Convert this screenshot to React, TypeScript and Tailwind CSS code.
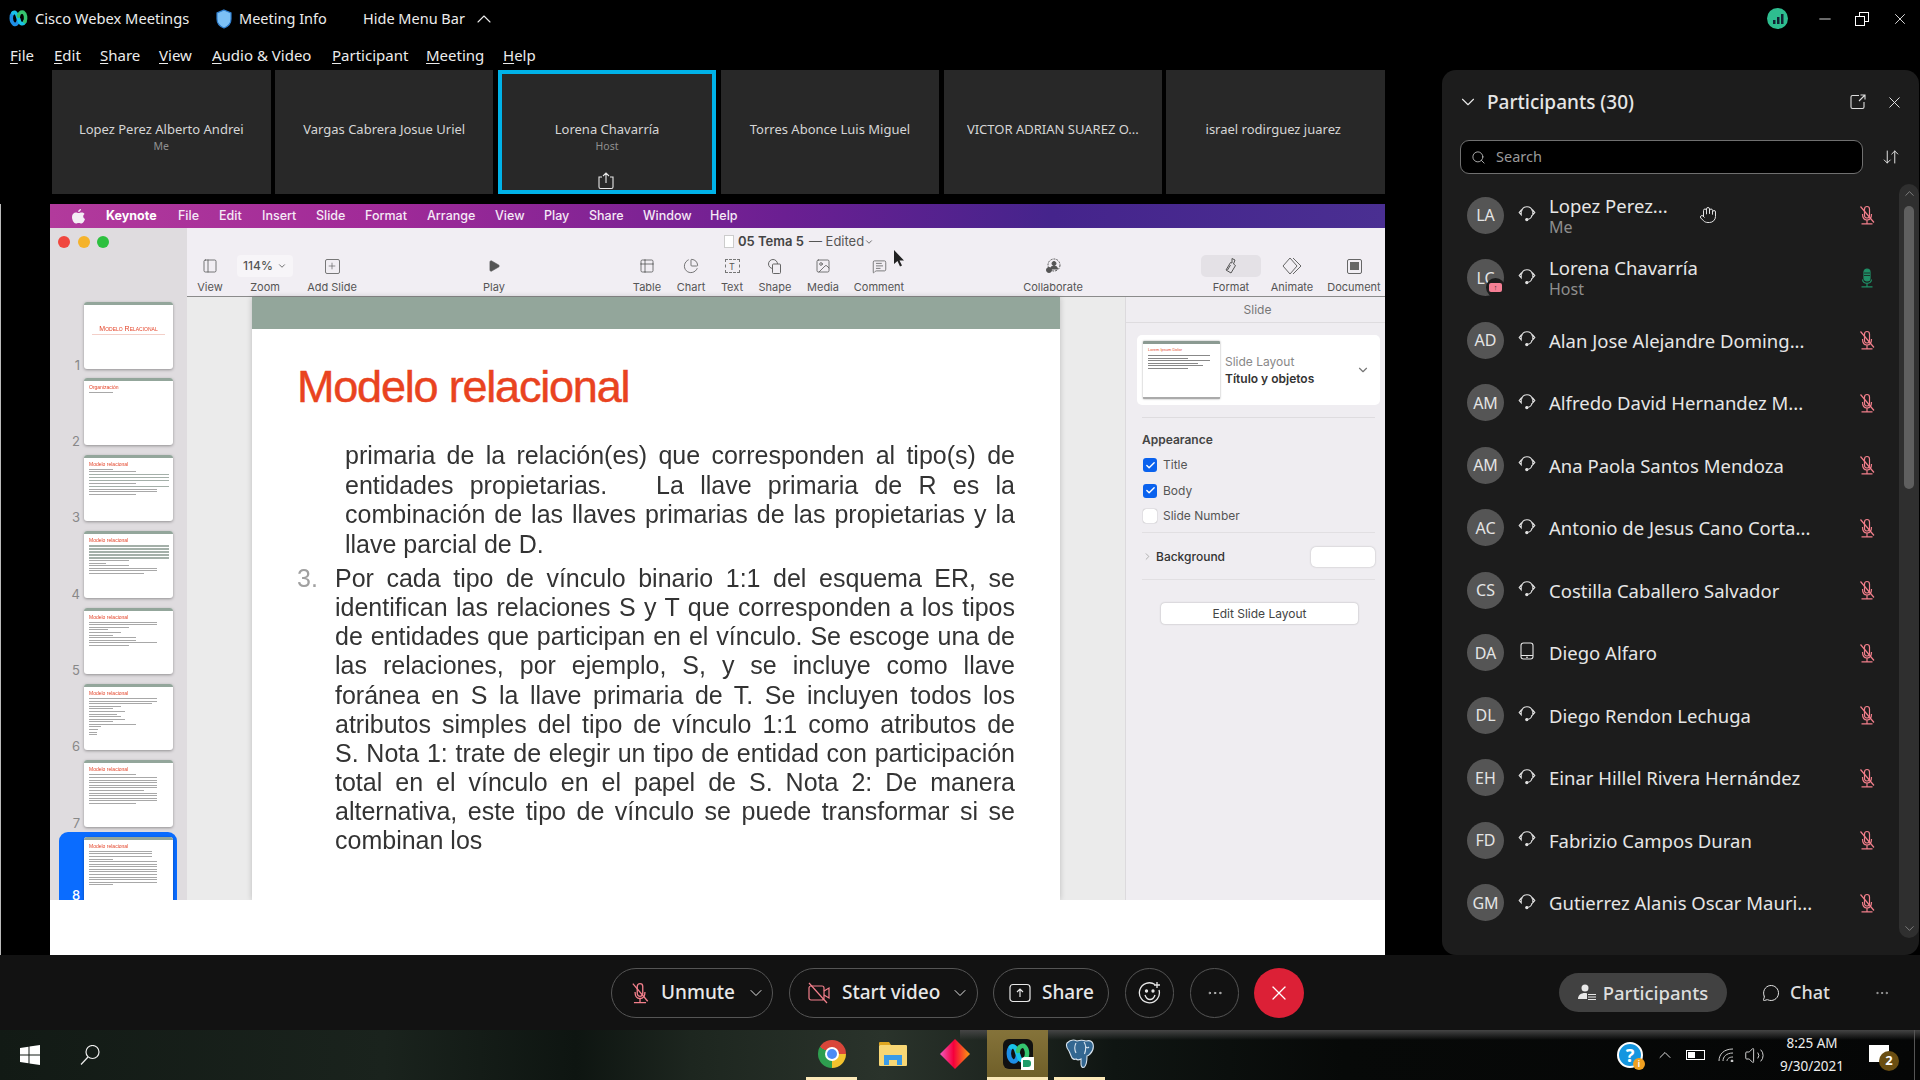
import {
  ArrowDownUp,
  ChartPie,
  ChevronDown,
  ChevronRight,
  ChevronUp,
  Check,
  Ellipsis,
  Hand,
  Image,
  MessageSquareText,
  MessageCircle,
  Minus,
  PanelLeft,
  Play,
  Plus,
  Search,
  Table2,
  Volume2,
  X,
} from 'lucide-react';

const tiles = [
  { name: 'Lopez Perez Alberto Andrei', sub: 'Me' },
  { name: 'Vargas Cabrera Josue Uriel' },
  { name: 'Lorena Chavarría', sub: 'Host', active: true },
  { name: 'Torres Abonce Luis Miguel' },
  { name: 'VICTOR ADRIAN SUAREZ O...' },
  { name: 'israel rodirguez juarez', last: true },
];

const participants = [
  { initials: 'LA', name: 'Lopez Perez...', sub: 'Me', hand: true },
  { initials: 'LC', name: 'Lorena Chavarría', sub: 'Host', host: true },
  { initials: 'AD', name: 'Alan Jose Alejandre Doming...' },
  { initials: 'AM', name: 'Alfredo David Hernandez M...' },
  { initials: 'AM', name: 'Ana Paola Santos Mendoza' },
  { initials: 'AC', name: 'Antonio de Jesus Cano Corta...' },
  { initials: 'CS', name: 'Costilla Caballero Salvador' },
  { initials: 'DA', name: 'Diego Alfaro', phone: true },
  { initials: 'DL', name: 'Diego Rendon Lechuga' },
  { initials: 'EH', name: 'Einar Hillel Rivera Hernández' },
  { initials: 'FD', name: 'Fabrizio Campos Duran' },
  { initials: 'GM', name: 'Gutierrez Alanis Oscar Mauri...' },
];

const macMenu = ['File', 'Edit', 'Insert', 'Slide', 'Format', 'Arrange', 'View', 'Play', 'Share', 'Window', 'Help'];
const appMenu = [
  { key: 'F', rest: 'ile', cell: 'w-[44px]' },
  { key: 'E', rest: 'dit', cell: 'w-[46px]' },
  { key: 'S', rest: 'hare', cell: 'w-[59px]' },
  { key: 'V', rest: 'iew', cell: 'w-[53px]' },
  { key: 'A', rest: 'udio & Video', cell: 'w-[120px]' },
  { key: 'P', rest: 'articipant', cell: 'w-[94px]' },
  { key: 'M', rest: 'eeting', cell: 'w-[77px]' },
  { key: 'H', rest: 'elp', cell: 'w-[40px]' },
];

const thumbs = [
  { title: 'Modelo Relacional', lines: [] as number[], cover: true },
  { title: 'Organización', lines: [30] },
  { title: 'Modelo relacional', lines: [30, 60, 0, 0, 0, 60, 0, 86, 86, 60] },
  { title: 'Modelo relacional', lines: [0, 0, 0, 0, 0, 50, 22, 50, 86, 86, 70] },
  { title: 'Modelo relacional', lines: [86, 86, 50, 24, 40, 30, 60, 60, 86, 50] },
  { title: 'Modelo relacional', lines: [86, 86, 80, 40, 30, 45, 35, 40, 45, 30, 60, 15, 12, 10, 10] },
  { title: 'Modelo relacional', lines: [60, 86, 86, 86, 86, 86, 70, 86, 86, 86, 86, 60] },
  { title: 'Modelo relacional', lines: [80, 80, 80, 30, 86, 86, 86, 86, 86, 86, 86, 86, 86, 30] },
];

const toolbarItems = [
  { label: 'View', cell: 'w-[40px] ml-[3px]', icon: <PanelLeft size={16} strokeWidth={1.2} /> },
  { label: 'Zoom', cell: 'w-[58px] ml-[6px]', icon: <span className="flex items-center gap-1 rounded bg-[#f7f5f8] px-1.5 py-0.5 text-[12px] font-medium text-[#555]">114% <ChevronDown size={10} /></span> },
  { label: 'Add Slide', cell: 'w-[60px] ml-[8px]', icon: <span className="flex h-[15px] w-[15px] items-center justify-center rounded-[2px] border border-[#777]"><Plus size={10} strokeWidth={1.5} /></span> },
  { label: 'Play', cell: 'w-[40px] ml-[112px]', icon: <Play size={14} fill="#555" strokeWidth={1} /> },
  { label: 'Table', cell: 'w-[40px] ml-[113px]', icon: <Table2 size={16} strokeWidth={1.2} /> },
  { label: 'Chart', cell: 'w-[40px] ml-[4px]', icon: <ChartPie size={16} strokeWidth={1.2} /> },
  { label: 'Text', cell: 'w-[40px] ml-[1px]', icon: <span className="flex h-[14px] w-[15px] items-center justify-center border border-dashed border-[#777] text-[9px] leading-none">T</span> },
  { label: 'Shape', cell: 'w-[40px] ml-[3px]', icon: <ShapeIcon /> },
  { label: 'Media', cell: 'w-[40px] ml-[8px]', icon: <Image size={16} strokeWidth={1.2} /> },
  { label: 'Comment', cell: 'w-[60px] ml-[6px]', icon: <MessageSquareText size={15} strokeWidth={1.2} /> },
  { label: 'Collaborate', cell: 'w-[80px] ml-[104px]', icon: <CollabIcon /> },
  { label: 'Format', cell: 'w-[62px] ml-[107px]', icon: <FormatIcon />, active: true },
  { label: 'Animate', cell: 'w-[56px] ml-[2px]', icon: <AnimateIcon /> },
  { label: 'Document', cell: 'w-[64px] ml-[2px]', icon: <span className="flex h-[15px] w-[15px] items-center justify-center rounded-[2px] border border-[#666]"><span className="h-[8px] w-[9px] bg-[#666]" /></span> },
];

function ShapeIcon() {
  return (
    <svg width="16" height="17" viewBox="0 0 16 17" fill="none" stroke="#666" strokeWidth="1">
      <circle cx="6" cy="6" r="4.5" />
      <rect x="5.5" y="6" width="8" height="9.5" rx="1" fill="#f1eef3" />
    </svg>
  );
}

function CollabIcon() {
  return (
    <svg width="17" height="16" viewBox="0 0 17 16" fill="none" stroke="#555" strokeWidth="1">
      <circle cx="9" cy="7" r="6" strokeDasharray="2 1" />
      <circle cx="9" cy="5.5" r="2" fill="#555" />
      <path d="M5.5 11a3.5 3 0 0 1 7 0z" fill="#555" />
      <circle cx="4" cy="12" r="2.5" fill="#555" />
    </svg>
  );
}

function FormatIcon() {
  return (
    <svg width="16" height="18" viewBox="0 0 16 18" fill="none" stroke="#555" strokeWidth="1">
      <path d="M9 1.500l3 1.500-1.500 4 2 1.500-4.500 7.500-5-3 4.500-7.500 1.500.5z" />
      <path d="M7.500 8l-3 5" />
    </svg>
  );
}

function AnimateIcon() {
  return (
    <svg width="20" height="18" viewBox="0 0 20 18" fill="none" stroke="#666" strokeWidth="1">
      <path d="M8 1l7 8-7 8-7-8z" />
      <path d="M11 1l8 8-8 8" />
    </svg>
  );
}

function WebexLogo({ size = 19 }: { size?: number }) {
  return (
    <svg width={size} height={size} viewBox="0 0 24 24" fill="none" strokeWidth="4.5" strokeLinecap="round">
      <path d="M5 5c-3 3-3 11 1 14 4 2 6-3 6-7" stroke="#1e8fe6" />
      <path d="M5 5c3-2 5 1 6 5l2 5c1 4 5 5 7 1" stroke="#18c2e8" />
      <path d="M12 9c0-3 3-6 6-5 3 2 4 8 2 12" stroke="#35c46f" />
    </svg>
  );
}

function Headset() {
  return (
    <svg width="20" height="20" viewBox="0 0 18 18" fill="none" stroke="#e6e6e6" strokeWidth="1.1">
      <path d="M3.600 7.200a5.500 5.500 0 0 1 10.800 0" />
      <path d="M3.200 6.200L1.200 8.600l2 2.200zM14.800 6.200l2 2.400-2 2.200z" />
      <path d="M14 11c-.4 2.600-2 4-4.200 4.300" />
      <circle cx="8.800" cy="15.600" r="1.100" fill="#e6e6e6" />
    </svg>
  );
}

function Phone() {
  return (
    <svg width="14" height="18" viewBox="0 0 14 18" fill="none" stroke="#e6e6e6" strokeWidth="1.1">
      <rect x="1" y="1" width="12" height="16" rx="2.5" />
      <path d="M1 13.500h12M6 15.300h2" />
    </svg>
  );
}

function MutedMic({ size = 20, color = '#f27f8b' }: { size?: number; color?: string }) {
  return (
    <svg width={size} height={size} viewBox="0 0 20 20" fill="none" stroke={color} strokeWidth="1.2">
      <path d="M7.500 4a2.500 2.500 0 0 1 5 0v6.500a2.500 2.500 0 0 1-5 0z" />
      <path d="M5.500 9c0 4 2 6 4.500 6s4.500-2 4.500-6" />
      <path d="M10 15v3.500M4.500 18.800h11M3.500 1.500l13.500 16" />
    </svg>
  );
}

function ActiveMic() {
  return (
    <svg width="20" height="20" viewBox="0 0 20 20" fill="none" stroke="#1f8f66" strokeWidth="1.2">
      <rect x="7" y="1" width="6" height="12" rx="3" fill="#1f8f66" />
      <path d="M7 5h6M7 7.500h6" stroke="#1c1c1c" strokeWidth="0.8" />
      <path d="M5.500 11.500c.3 2.500 2 3.800 4.500 3.800s4.200-1.300 4.500-3.800M10 15.300v3.200M4.500 18.800h11" />
    </svg>
  );
}

function ThumbSlide({ title, lines, cover }: { title: string; lines: number[]; cover?: boolean }) {
  return (
    <div className="h-[66.5px] w-[89px] shrink-0 overflow-hidden rounded-[3px] bg-white shadow-[0_1px_3px_rgba(0,0,0,0.35)] blur-[0.3px]">
      <div className="h-[3px] bg-[#93a69b]" />
      {cover ? (
        <div className="mx-[8px] mt-[20px] border-b border-[#f3cfc8] pb-[1px] text-center font-['Liberation_Sans',sans-serif] text-[7px] leading-[8px] text-[#e4452a] [font-variant:small-caps]">
          {title}
        </div>
      ) : (
        <div className="px-[5px] pt-[3px]">
          <div className="font-['Liberation_Sans',sans-serif] text-[5px] leading-[6px] text-[#e4452a]">{title}</div>
          <div className="mt-[2px] flex flex-col gap-[1.6px]">
            {lines.map((w, i) => (
              <div
                key={i}
                className={w === 0 ? 'h-[1.4px] w-[80px] bg-[#a4b0a9]' : 'h-[1px] bg-[#a8a8a8]'}
                style={w === 0 ? undefined : { width: `${w}%` }}
              />
            ))}
          </div>
        </div>
      )}
    </div>
  );
}

function JLine({ children }: { children: string }) {
  return <span className="block [text-align-last:justify]">{children}</span>;
}

function Keynote() {
  return (
    <div className="relative w-[1335px] font-['Inter',sans-serif] text-[#555]">
      {/* mac menu bar */}
      <div className="flex h-[24px] items-center bg-[linear-gradient(90deg,#b23a9c_0%,#a02a98_25%,#6b1f92_55%,#45248c_75%,#4a2f92_100%)] text-[12.5px] font-medium text-[#f5e9f6]">
        <svg className="ml-[22px]" width="13" height="15" viewBox="0 0 13 15" fill="#f4eef5">
          <path d="M9 0c.1 1.500-1.200 3-2.800 2.900C6 1.500 7.500.1 9 0zM12.600 5c-2 1.200-1.700 4 .4 5-.6 1.700-2 4.500-3.500 4.500-1 0-1.600-.6-2.800-.6s-1.900.6-2.800.6C2 14.500 0 11 0 8c0-3 2-4.600 3.800-4.600 1.100 0 2 .7 2.800.7.800 0 1.800-.8 3.100-.7.800 0 2.100.4 2.900 1.600z" />
        </svg>
        <span className="ml-[21px] w-[72px] font-bold text-white">Keynote</span>
        {macMenu.map((m, i) => (
          <span
            key={m}
            className={
              ['w-[41px]', 'w-[43px]', 'w-[54px]', 'w-[49px]', 'w-[62px]', 'w-[68px]', 'w-[49px]', 'w-[45px]', 'w-[54px]', 'w-[67px]', 'w-[30px]'][i]
            }
          >
            {m}
          </span>
        ))}
      </div>

      <div className="flex h-[672px] overflow-hidden">
        {/* slide navigator */}
        <div className="w-[137px] shrink-0 bg-[#dfdcdf]">
          <div className="flex gap-[7.5px] pl-[8px] pt-[8px]">
            <span className="h-[12px] w-[12px] rounded-full bg-[#f0473f]" />
            <span className="h-[12px] w-[12px] rounded-full bg-[#f5b32b]" />
            <span className="h-[12px] w-[12px] rounded-full bg-[#2dc03f]" />
          </div>
          <div className="flex flex-col pt-[54px]">
            {thumbs.map((t, i) =>
              i === 7 ? (
                <div key={i} className="relative z-10 -mt-[5px] ml-[9px] flex w-[118px] items-end rounded-t-[9px] bg-[#0a6cff] pl-[25px] pt-[5px]">
                  <span className="absolute bottom-0 left-[13px] text-[13px] font-medium leading-[15px] text-white">8</span>
                  <ThumbSlide {...t} />
                </div>
              ) : (
                <div key={i} className="mb-[9.9px] flex items-end">
                  <span className="-mb-[3px] w-[30px] text-right text-[13px] leading-[14px] text-[#888]">{i + 1}</span>
                  <span className="ml-[4px]">
                    <ThumbSlide {...t} />
                  </span>
                </div>
              ),
            )}
          </div>
        </div>

        <div className="flex min-w-0 flex-1 flex-col">
          {/* toolbar */}
          <div className="h-[69px] shrink-0 border-b border-[#8b8b8b] bg-[#f1eef3]">
            <div className="flex h-[27px] items-center pl-[537px] text-[13px]">
              <span className="mr-[4px] h-[13px] w-[10px] border border-[#ccc] bg-white" />
              <span className="font-semibold text-[#444]">05 Tema 5</span>
              <span className="ml-[5px]">— Edited</span>
              <ChevronDown size={10} strokeWidth={2} />
            </div>
            <div className="flex text-[11px]">
              {toolbarItems.map((item) => (
                <div key={item.label} className={`${item.cell} flex shrink-0 flex-col items-center`}>
                  <div
                    className={
                      item.active
                        ? 'flex h-[22px] w-[60px] items-center justify-center rounded-[5px] bg-[#e4e1e6]'
                        : 'flex h-[22px] items-center justify-center'
                    }
                  >
                    {item.icon}
                  </div>
                  <span className="mt-[3px] whitespace-nowrap leading-[14px]">{item.label}</span>
                </div>
              ))}
            </div>
          </div>

          <div className="flex min-h-0 flex-1">
            {/* canvas */}
            <div className="w-[938px] shrink-0 bg-[#ebebeb] pl-[65px]">
              <div className="h-full w-[808px] bg-white shadow-[0_0_6px_rgba(0,0,0,0.2)] font-['Liberation_Sans',sans-serif] text-[#333]">
                <div className="h-[32px] bg-[#93a69b]" />
                <h1 className="ml-[45px] mt-[32px] text-[45px] leading-[52px] tracking-[-1.2px] text-[#e9431f] [-webkit-text-stroke:0.5px_#e9431f]">Modelo relacional</h1>
                <div className="blur-[0.25px]">
                  <div className="ml-[93px] mt-[28px] w-[670px] text-[25px] leading-[29.6px]">
                    <JLine>primaria de la relación(es) que corresponden al tipo(s) de</JLine>
                    <JLine>{'entidades propietarias.\u00A0\u00A0 La llave primaria de R es la'}</JLine>
                    <JLine>combinación de las llaves primarias de las propietarias y la</JLine>
                    <span className="block">llave parcial de D.</span>
                  </div>
                  <div className="ml-[45px] mt-[4.8px] flex text-[25px] leading-[29.1px]">
                    <span className="w-[38px] shrink-0 text-[#a0a0a0]">3.</span>
                    <div className="w-[680px]">
                      <JLine>Por cada tipo de vínculo binario 1:1 del esquema ER, se</JLine>
                      <JLine>identifican las relaciones S y T que corresponden a los tipos</JLine>
                      <JLine>de entidades que participan en el vínculo. Se escoge una de</JLine>
                      <JLine>las relaciones, por ejemplo, S, y se incluye como llave</JLine>
                      <JLine>foránea en S la llave primaria de T. Se incluyen todos los</JLine>
                      <JLine>atributos simples del tipo de vínculo 1:1 como atributos de</JLine>
                      <JLine>S. Nota 1: trate de elegir un tipo de entidad con participación</JLine>
                      <JLine>total en el vínculo en el papel de S. Nota 2: De manera</JLine>
                      <JLine>alternativa, este tipo de vínculo se puede transformar si se</JLine>
                      <span className="block">combinan los</span>
                    </div>
                  </div>
                </div>
              </div>
            </div>

            {/* inspector */}
            <div className="min-w-0 flex-1 border-l border-[#dcdadd] bg-[#efedf1] text-[12px]">
              <div className="flex h-[26px] items-center justify-center border-b border-[#dedcdf] pl-[4px] pt-[1px] text-[#777]">Slide</div>
              <div className="ml-[11px] mr-[5px] mt-[12px] flex h-[70px] items-center rounded-[5px] bg-white pl-[6px]">
                <div className="h-[58px] w-[77px] overflow-hidden rounded-[1px] border-b-2 border-[#aaa] bg-white shadow-[0_0_2px_rgba(0,0,0,0.4)]">
                  <div className="h-[3px] bg-[#8b9a92]" />
                  <div className="px-[5px] pt-[3px] font-['Liberation_Sans',sans-serif] text-[4px] leading-[6px] text-[#e4452a]">Lorem Ipsum Dolor</div>
                  <div className="flex flex-col gap-[1.5px] px-[5px] pt-[2px]">
                    <div className="h-[1px] w-[62px] bg-[#888]" />
                    <div className="h-[1px] w-[40px] bg-[#888]" />
                    <div className="h-[1px] w-[62px] bg-[#888]" />
                    <div className="h-[1px] w-[50px] bg-[#888]" />
                    <div className="h-[1px] w-[55px] bg-[#888]" />
                    <div className="h-[1px] w-[40px] bg-[#888]" />
                  </div>
                </div>
                <div className="ml-[5px] flex-1 leading-[17px]">
                  <div className="text-[#888]">Slide Layout</div>
                  <div className="font-semibold text-[#333]">Título y objetos</div>
                </div>
                <ChevronDown size={14} className="mr-[10px] text-[#777]" />
              </div>
              <div className="ml-[16px] mr-[10px] mt-[12px] border-t border-[#dedcdf] pt-[13px] font-semibold text-[#444]">Appearance</div>
              <div className="ml-[17px] mt-[9px] flex flex-col gap-[11.5px] text-[#555]">
                {['Title', 'Body', 'Slide Number'].map((l, i) => (
                  <div key={l} className="flex h-[14px] items-center gap-[6px]">
                    {i < 2 ? (
                      <span className="flex h-[14px] w-[14px] items-center justify-center rounded-[3px] bg-[#0a62ee]">
                        <Check size={11} strokeWidth={3} className="text-white" />
                      </span>
                    ) : (
                      <span className="h-[14px] w-[14px] rounded-[3px] bg-white shadow-[0_0_1px_rgba(0,0,0,0.5)]" />
                    )}
                    {l}
                  </div>
                ))}
              </div>
              <div className="ml-[16px] mr-[10px] mt-[9px] flex h-[48px] items-center border-y border-[#e1dfe2] pt-[1px] font-medium text-[#333]">
                <ChevronRight size={11} className="mr-[3px] text-[#aaa]" />
                Background
                <span className="ml-auto h-[20px] w-[64px] rounded-[5px] bg-white shadow-[0_0_2px_rgba(0,0,0,0.25)]" />
              </div>
              <div className="ml-[35px] mt-[23px] flex h-[21px] w-[197px] items-center justify-center rounded-[4px] bg-white text-[#444] shadow-[0_0_2px_rgba(0,0,0,0.3)]">
                Edit Slide Layout
              </div>
            </div>
          </div>
        </div>
      </div>

      <div className="h-[55px] bg-white" />

      {/* mouse pointer */}
      <svg className="absolute left-[843px] top-[46px]" width="12" height="17" viewBox="0 0 12 17" fill="#222">
        <path d="M1 0v14l3.500-3 2.500 5.500 2-1-2.500-5H11z" />
      </svg>
    </div>
  );
}

function CallButton({ icon, label, cell }: { icon: React.ReactNode; label: string; cell: string }) {
  return (
    <div className={`${cell} flex h-[50px] items-center rounded-full border border-[#555] text-[19px] font-medium text-[#e8e8e8]`}>
      {icon}
      {label}
    </div>
  );
}

export default function App() {
  return (
    <div className="flex h-screen w-[1920px] flex-col overflow-hidden bg-black font-['Noto_Sans',sans-serif] text-white">
      {/* title bar */}
      <div className="flex h-[37px] shrink-0 items-center text-[14.7px] text-[#ececec]">
        <span className="ml-[9px]">
          <WebexLogo />
        </span>
        <span className="ml-[7px] w-[180px]">Cisco Webex Meetings</span>
        <svg width="18" height="20" viewBox="0 0 18 20" fill="#7cc0f5" stroke="#2f7fd0" strokeWidth="1.2">
          <path d="M9 1l7 3v6c0 4-3 7.500-7 9-4-1.500-7-5-7-9V4z" />
        </svg>
        <span className="ml-[6px] w-[124px] text-[14.5px]">Meeting Info</span>
        <span className="text-[14.5px]">Hide Menu Bar</span>
        <ChevronUp size={24} strokeWidth={1.1} className="ml-[7px]" />
        <span className="ml-auto flex h-[21px] w-[21px] items-center justify-center rounded-full bg-[#2ebd8f]">
          <svg width="12" height="12" viewBox="0 0 12 12" fill="#123">
            <rect x="1" y="7" width="2.500" height="4" />
            <rect x="5" y="4" width="2.500" height="7" />
            <rect x="9" y="1" width="2.500" height="10" />
          </svg>
        </span>
        <Minus size={18} strokeWidth={1.2} className="ml-[28px]" />
        <span className="relative ml-[21px] h-[14px] w-[14px]">
          <span className="absolute right-0 top-0 h-[10px] w-[10px] border border-white" />
          <span className="absolute bottom-0 left-0 h-[10px] w-[10px] border border-white bg-black" />
        </span>
        <X size={18} strokeWidth={1.2} className="ml-[22px] mr-[11px]" />
      </div>

      {/* app menu */}
      <div className="flex h-[33px] shrink-0 items-center pl-[10px] pt-[3px] text-[15px] text-[#ececec]">
        {appMenu.map((m) => (
          <span key={m.key} className={m.cell}>
            <span className="underline underline-offset-2">{m.key}</span>
            {m.rest}
          </span>
        ))}
      </div>

      <div className="flex min-h-0 flex-1">
        <div className="relative w-[1442px] shrink-0 pl-[50px]">
          <span className="absolute bottom-0 left-0 top-[134px] w-px bg-[#bbb]" />
          <div className="flex h-[124px] gap-[4.3px] pl-[2px]">
            {tiles.map((t) => (
              <div
                key={t.name}
                className={
                  t.active
                    ? 'relative flex w-[218.6px] shrink-0 flex-col items-center border-[4px] border-[#00b2e8] bg-[#282828] pt-[46px] text-[#d6d6d6]'
                    : t.last
                      ? 'flex w-[218.6px] shrink-0 flex-col items-center bg-[#282828] pr-[5px] pt-[50px] text-[#d6d6d6]'
                      : 'flex w-[218.6px] shrink-0 flex-col items-center bg-[#282828] pt-[50px] text-[#d6d6d6]'
                }
              >
                <span className="text-[13px] leading-[18px]">{t.name}</span>
                {t.sub && <span className="text-[10.5px] leading-[17px] text-[#909090]">{t.sub}</span>}
                {t.active && (
                  <svg className="absolute bottom-0 left-[94px]" width="20" height="18" viewBox="0 0 20 18" fill="none" stroke="#e8e8e8" strokeWidth="1.1">
                    <path d="M6 5H3v10q0 1.500 1.500 1.500h11Q17 16.500 17 15V5h-3M10 11V1M7 4l3-3 3 3" />
                  </svg>
                )}
              </div>
            ))}
          </div>
          <div className="mt-[10px]">
            <Keynote />
          </div>
        </div>

        {/* participants panel */}
        <div className="flex w-[477px] shrink-0 flex-col rounded-[14px] bg-[#1c1c1c]">
          <div className="flex h-[70px] shrink-0 items-center pb-[6px] pl-[15px]">
            <ChevronDown size={22} strokeWidth={1.2} className="text-[#e8e8e8]" />
            <span className="ml-[8px] text-[19px] font-medium text-[#e6e6e6]">Participants (30)</span>
            <svg className="ml-auto" width="16" height="16" viewBox="0 0 16 16" fill="none" stroke="#ddd" strokeWidth="1.1">
              <path d="M9 1.500H2.500q-1.500 0-1.500 1.500v10q0 1.500 1.500 1.500h10q1.500 0 1.500-1.500V8M9 7l6-6M10.500 1H15v4.500" />
            </svg>
            <X size={19} strokeWidth={1.2} className="ml-[19px] mr-[15px] text-[#e8e8e8]" />
          </div>
          <div className="flex h-[34px] shrink-0 items-center pl-[18px]">
            <div className="flex h-[34px] w-[403px] items-center rounded-[9px] border border-[#707070] bg-black pl-[10px] text-[14.5px] text-[#9a9a9a]">
              <Search size={15} strokeWidth={1.3} className="text-[#ccc]" />
              <span className="ml-[10px]">Search</span>
            </div>
            <ArrowDownUp size={18} strokeWidth={1.3} className="ml-[19px] text-[#e4e4e4]" />
          </div>
          <div className="flex min-h-0 flex-1 pt-[10px]">
            <div className="min-w-0 flex-1">
              {participants.map((p, i) => (
                <div key={i} className="flex h-[62.5px] items-center pl-[25px]">
                  <div className="relative flex h-[37px] w-[37px] shrink-0 items-center justify-center rounded-full bg-[#555] text-[16px] text-[#e4e4e4]">
                    {p.initials}
                    {p.host && (
                      <span className="absolute -bottom-[1px] -right-[1px] flex h-[19px] w-[19px] items-center justify-center rounded-full bg-[#1c1c1c]">
                        <span className="flex h-[9px] w-[13px] items-center justify-center rounded-[2px] bg-[#f57f94] text-[7px] leading-none text-[#1c1c1c]">↑</span>
                      </span>
                    )}
                  </div>
                  <span className="ml-[14px] -mt-[4px] flex w-[18px] shrink-0 justify-center">{p.phone ? <Phone /> : <Headset />}</span>
                  <div className="ml-[13px] flex w-[308px] shrink-0 items-center">
                    <div className={p.hand ? 'w-[150px] shrink-0' : 'min-w-0'}>
                      <div className="whitespace-nowrap text-[18.5px] leading-[23px] text-[#e6e6e6]">{p.name}</div>
                      {p.sub && <div className="text-[16px] leading-[20px] text-[#8e8e8e]">{p.sub}</div>}
                    </div>
                    {p.hand && <Hand size={18} strokeWidth={1.3} className="text-[#e6e6e6]" />}
                  </div>
                  {p.host ? <ActiveMic /> : <MutedMic />}
                </div>
              ))}
            </div>
            <div className="mb-[17px] flex w-[20px] shrink-0 flex-col items-center rounded-[10px] bg-[#2f2f2f] pt-[2px] text-[#aaa]">
              <ChevronUp size={15} strokeWidth={1} />
              <div className="mt-[5px] h-[283px] w-[10px] rounded-[5px] bg-[#5f5f5f]" />
              <ChevronDown size={15} strokeWidth={1} className="mb-[2px] mt-auto" />
            </div>
          </div>
        </div>
      </div>

      {/* call controls */}
      <div className="flex h-[75px] shrink-0 items-center bg-[#121212] pl-[611px]">
        <CallButton
          cell="w-[162px] pl-[17px]"
          label="Unmute"
          icon={
            <span className="mr-[10px]">
              <MutedMic size={22} />
            </span>
          }
        />
        <ChevronDown size={20} strokeWidth={1.2} className="-ml-[27px] mr-[7px] text-[#e0e0e0]" />
        <div className="ml-[16px]">
          <CallButton
            cell="w-[189px] pl-[17px]"
            label="Start video"
            icon={
              <svg className="mr-[11px]" width="24" height="22" viewBox="0 0 24 22" fill="none" stroke="#f27f8b" strokeWidth="1.2">
                <rect x="2" y="4" width="15" height="14" rx="2" />
                <path d="M17 9l5-3v10l-5-3M2 1l18 20" />
              </svg>
            }
          />
        </div>
        <ChevronDown size={20} strokeWidth={1.2} className="-ml-[28px] mr-[8px] text-[#e0e0e0]" />
        <div className="ml-[15px]">
          <CallButton
            cell="w-[116px] pl-[15px]"
            label="Share"
            icon={
              <svg className="mr-[11px]" width="22" height="20" viewBox="0 0 22 20" fill="none" stroke="#e8e8e8" strokeWidth="1.2">
                <rect x="1" y="1.500" width="20" height="17" rx="3" />
                <path d="M11 14V6M8 9l3-3 3 3" />
              </svg>
            }
          />
        </div>
        <div className="ml-[16px] flex h-[50px] w-[49px] items-center justify-center rounded-full border border-[#555]">
          <svg width="24" height="24" viewBox="0 0 24 24" fill="none" stroke="#e8e8e8" strokeWidth="1.3">
            <path d="M17 3.500A10 10 0 1 0 21 9" />
            <path d="M19 1v6M16 4h6M7 14c1 3 3 4.500 5 4.500s4-1.500 5-4.500" />
            <circle cx="8.500" cy="10" r="1" fill="#e8e8e8" />
            <circle cx="15" cy="10" r="1" fill="#e8e8e8" />
          </svg>
        </div>
        <div className="ml-[16px] flex h-[50px] w-[49px] items-center justify-center rounded-full border border-[#555] text-[#ccc]">
          <Ellipsis size={18} strokeWidth={1.2} />
        </div>
        <div className="ml-[15px] flex h-[50px] w-[50px] items-center justify-center rounded-full bg-[#dc2036] text-white">
          <X size={24} strokeWidth={1.3} />
        </div>
        <div className="ml-[255px] flex h-[39px] w-[168px] items-center justify-center gap-[7px] rounded-full bg-[#414141] text-[18.5px] font-medium text-[#dedede]">
          <svg width="18" height="18" viewBox="0 0 18 18" fill="#e8e8e8">
            <circle cx="7" cy="4" r="3.500" />
            <path d="M0 15c0-4 3-6 7-6 1 0 1.500.2 2 .4V15z" />
            <path d="M10 10.500h8M10 13h8M10 15.500h8" stroke="#e8e8e8" strokeWidth="1" />
          </svg>
          Participants
        </div>
        <MessageCircle size={18} strokeWidth={1.3} className="ml-[35px] text-[#e8e8e8]" />
        <span className="ml-[10px] text-[18px] font-medium text-[#dedede]">Chat</span>
        <Ellipsis size={16} strokeWidth={1.2} className="ml-[44px] text-[#bbb]" />
      </div>

      {/* taskbar */}
      <div className="relative flex h-[50px] shrink-0 items-stretch bg-[linear-gradient(90deg,#121a15_0%,#1a231d_20%,#0e1511_30%,#1d261f_36%,#2a332b_46%,#1a211c_54%,#0f1512_58%,#070908_70%,#050606_100%)]">
        <span className="absolute left-[960px] right-0 top-0 h-[10px] bg-gradient-to-b from-[#454545] to-transparent" />
        <span className="absolute bottom-0 right-[5px] top-0 w-px bg-[#555]" />
        <svg className="ml-[20px] mt-[15px]" width="20" height="20" viewBox="0 0 20 20" fill="#fff">
          <path d="M0 3l8.500-1.200v7.700H0zM9.500 1.600L20 0v9.500H9.500zM0 10.500h8.500v7.700L0 17zM9.500 10.500H20V20L9.500 18.400z" />
        </svg>
        <svg className="ml-[40px] mt-[15px]" width="20" height="20" viewBox="0 0 20 20" fill="none" stroke="#eee" strokeWidth="1.2">
          <circle cx="12.500" cy="7" r="6.500" />
          <path d="M8 12L1 19.500" />
        </svg>

        <div className="ml-[706px] flex w-[51px] flex-col">
          <div className="flex flex-1 items-center justify-center">
            <div className="flex h-[28px] w-[28px] items-center justify-center rounded-full bg-[conic-gradient(from_-60deg,#d9463a_0_150deg,#f2c22e_150deg_240deg,#2e9e4f_240deg_360deg)]">
              <span className="flex h-[14px] w-[14px] items-center justify-center rounded-full bg-white">
                <span className="h-[10px] w-[10px] rounded-full bg-[#4c8bf5]" />
              </span>
            </div>
          </div>
          <div className="h-[3px] bg-[#fbe9b8]" />
        </div>

        <div className="ml-[11px] flex w-[50px] flex-col">
          <div className="flex flex-1 items-center justify-center">
            <svg width="28" height="26" viewBox="0 0 28 26">
              <path d="M0 2q0-1 1-1h9l2 3H0z" fill="#dfa620" />
              <rect y="4" width="28" height="21" rx="1" fill="#f8d775" />
              <path d="M5 24V14h18v10h-5v-5h-8v5z" fill="#3a9be8" />
            </svg>
          </div>
          <div className="h-[3px]" />
        </div>

        <div className="ml-[12px] flex w-[50px] flex-col">
          <div className="flex flex-1 items-center justify-center">
            <svg width="30" height="30" viewBox="0 0 30 30">
              <defs>
                <linearGradient id="diamondFill" x1="0" x2="1" y1="0" y2="0">
                  <stop offset="0" stopColor="#ee5bc0" />
                  <stop offset="0.45" stopColor="#f5003c" />
                  <stop offset="1" stopColor="#f89a10" />
                </linearGradient>
              </defs>
              <path d="M15 0l15 15-15 15L0 15z" fill="url(#diamondFill)" />
            </svg>
          </div>
          <div className="h-[3px]" />
        </div>

        <div className="relative ml-[7px] flex w-[61px] flex-col bg-[linear-gradient(180deg,#85733a,#6e5e28)]">
          <div className="flex flex-1 items-center justify-center">
            <div className="relative flex h-[30px] w-[30px] items-center justify-center rounded-[6px] bg-[#111]">
              <WebexLogo size={24} />
              <span className="absolute -bottom-[1px] -right-[1px] flex h-[13px] w-[13px] items-center justify-center rounded-tl-[4px] bg-white">
                <span className="h-[7px] w-[8px] rounded-r-[3px] bg-[#1e9c6a]" />
              </span>
            </div>
          </div>
          <div className="h-[3px] bg-[#fbe9b8]" />
        </div>

        <div className="ml-[6px] flex w-[51px] flex-col">
          <div className="flex flex-1 items-center justify-center">
            <svg width="30" height="30" viewBox="0 0 30 30" stroke="#d8e4ee" strokeWidth="1.1">
              <path d="M2 4c3-3 7-3.500 10-2 3-1 6-1 9 0 3-.8 6 0 7 3 1 4-1 8-3 10-1 1-2 2-3 2 0 4 0 8-2.500 11-2 1-3.500 0-3.500-3v-5c-2 1-4 1-5 0-2 1-3 0-4-1-1.500-3-2-5-3-7C1.500 9 1 6 2 4z" fill="#336791" />
              <path d="M11 4c-1.500 3-1.500 7 0 10M19 3c2 3 2 8 .5 12M24 8c-1 1-2 1-3 0" fill="none" />
            </svg>
          </div>
          <div className="h-[3px] bg-[#fbe9b8]" />
        </div>

        {/* tray */}
        <div className="relative ml-[512px] flex h-[26px] w-[26px] items-center justify-center self-center rounded-full border-[2px] border-white bg-[#1496e0] text-[18px] font-bold leading-none text-white">
          ?
          <span className="absolute -bottom-[4px] -right-[4px] flex h-[12px] w-[12px] items-center justify-center rounded-full bg-[#f0a020] text-[8px] font-bold leading-none">i</span>
        </div>
        <ChevronUp size={20} strokeWidth={1.2} className="ml-[12px] self-center text-[#ddd]" />
        <span className="ml-[11px] flex h-[10px] w-[19px] self-center border border-white p-[1px]">
          <span className="w-[7px] bg-white" />
        </span>
        <svg className="ml-[13px] self-center" width="16" height="14" viewBox="0 0 16 14" fill="none" stroke="#ccc" strokeWidth="1">
          <path d="M1 13C1 6 6 1 15 1M5 13c0-4 3-8 10-8M9 13c0-2 2-4 6-4" />
          <circle cx="14" cy="13" r="1" fill="#fff" />
        </svg>
        <Volume2 size={21} strokeWidth={1} className="ml-[10px] self-center text-[#eee]" />
        <div className="ml-[10px] flex w-[74px] flex-col items-center justify-center text-center text-[13.5px] leading-[23px] text-[#eee]">
          <span>8:25 AM</span>
          <span>9/30/2021</span>
        </div>
        <span className="relative ml-[20px] mt-[15px] h-[17px] w-[20px] bg-white">
          <span className="absolute -bottom-[9px] -right-[10px] flex h-[20px] w-[20px] items-center justify-center rounded-full bg-[#6a4e12] text-[13px] font-bold">2</span>
        </span>
      </div>
    </div>
  );
}
